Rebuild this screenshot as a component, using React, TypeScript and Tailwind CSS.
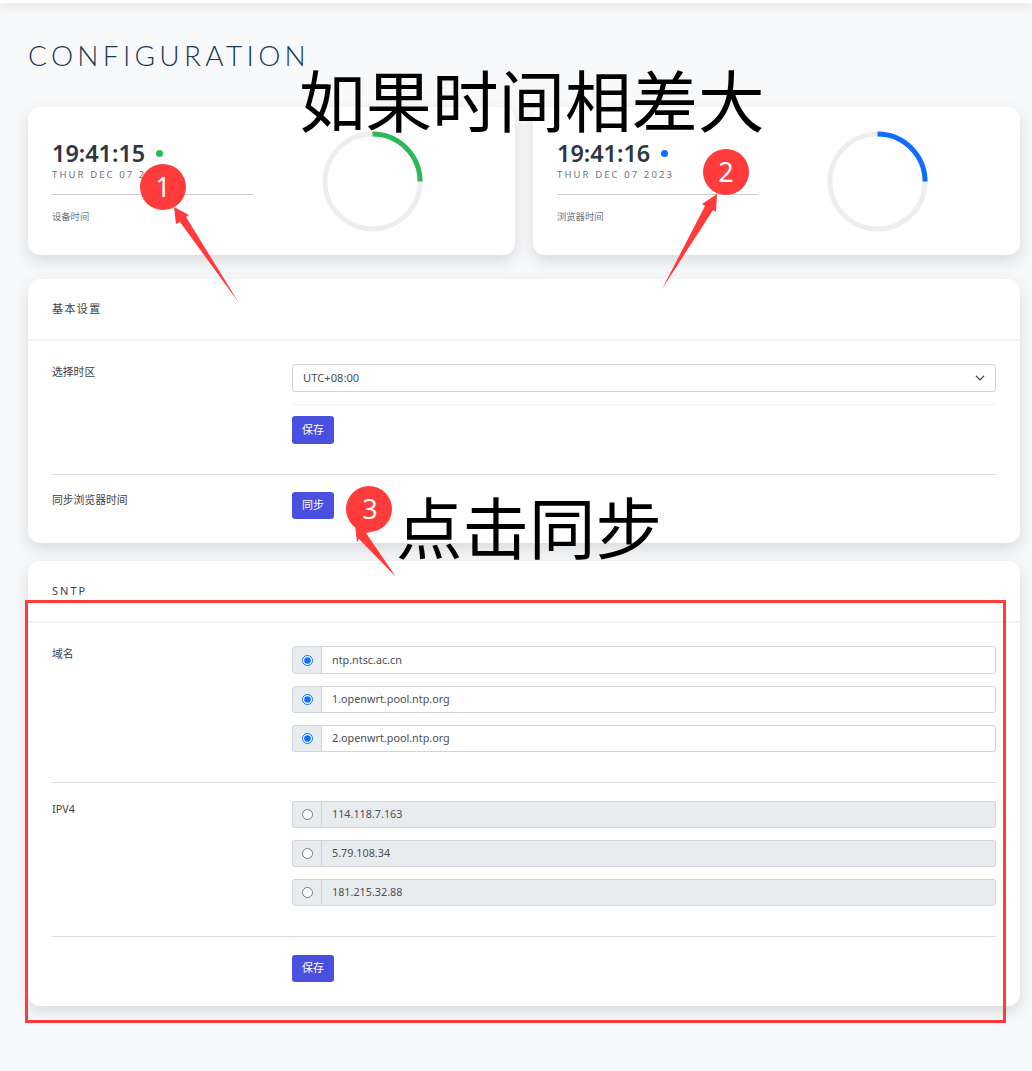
import type { ReactNode } from 'react';

const cjk = '"Noto Sans", "Noto Sans CJK SC", sans-serif';

function Clock({ time, date, label, dot, arc }: { time: string; date: string; label: string; dot: string; arc: string }) {
    return (
        <div className="flex-1 h-[148px] bg-white rounded-[12px] shadow-[0_6px_16px_rgba(0,0,0,0.13)] px-6 flex">
            <div className="w-[201px] pt-[30px]">
                <div className="flex items-center h-[32px]">
                    <span className="text-[23.4px] leading-[32px] font-semibold text-[#2f3640] w-[92px] whitespace-nowrap">{time}</span>
                    <span className={`ml-[12px] w-[7px] h-[7px] rounded-full ${dot}`} />
                </div>
                <div className="-mt-[1px] text-[9.5px] leading-[14px] tracking-[2.1px] text-[#6c757d] whitespace-nowrap">{date}</div>
                <div className="mt-[12px] border-t border-[#ccc]" />
                <div className="mt-[15px] text-[9.3px] leading-[14px] text-[#6c757d]">{label}</div>
            </div>
            <div className="flex-1 flex items-center justify-center pl-[1px]">
                <svg width="101" height="101" viewBox="0 0 102 102">
                    <circle cx="51" cy="51" r="48" fill="none" stroke="#eeeeee" strokeWidth="5" />
                    <path d="M51 3 A48 48 0 0 1 99 51" fill="none" stroke={arc} strokeWidth="5" />
                </svg>
            </div>
        </div>
    );
}

function Card({ title, tracking, children }: { title: string; tracking: string; children: ReactNode }) {
    return (
        <div className="bg-white rounded-[12px] shadow-[0_6px_16px_rgba(0,0,0,0.13)]">
            <div className={`h-[62px] px-6 flex items-center border-b-2 border-[#f3f4f5] text-[11px] text-[#3c4248] ${tracking}`}>{title}</div>
            {children}
        </div>
    );
}

function Row({ label, children }: { label: string; children: ReactNode }) {
    return (
        <div className="flex">
            <div className="w-[240px] text-[10.8px] leading-[16px] text-[#3c4248]">{label}</div>
            <div className="flex-1">{children}</div>
        </div>
    );
}

function PrimaryButton({ tall, children }: { tall?: boolean; children: ReactNode }) {
    return (
        <button className={`w-[42px] rounded-[3px] bg-[#4950df] text-white text-[11px] flex items-center justify-center ${tall ? 'h-[28px]' : 'h-[27px]'}`}>
            {children}
        </button>
    );
}

function RadioInput({ value, checked, tall }: { value: string; checked: boolean; tall?: boolean }) {
    return (
        <div className={`flex text-[10.8px] text-[#495057] ${tall ? 'h-[28px]' : 'h-[27px]'}`}>
            <div className="w-[30px] bg-[#e9ecef] border border-[#ced4da] rounded-l-[3px] flex items-center justify-center">
                <input type="radio" checked={checked} readOnly className="m-0 w-[11px] h-[11px] accent-[#0d6efd]" />
            </div>
            <div className={`flex-1 -ml-px border border-[#ced4da] rounded-r-[3px] pl-[10px] flex items-center ${checked ? 'bg-white' : 'bg-[#e9ecef]'}`}>
                {value}
            </div>
        </div>
    );
}

export default function App() {
    const domains = ['ntp.ntsc.ac.cn', '1.openwrt.pool.ntp.org', '2.openwrt.pool.ntp.org'];
    const addresses = ['114.118.7.163', '5.79.108.34', '181.215.32.88'];

    return (
        <div className="relative min-h-[1071px] bg-[#f8f9fb] overflow-hidden" style={{ fontFamily: cjk }}>
            <div className="h-[3px] bg-white shadow-[0_2px_10px_rgba(0,0,0,0.2)]" />

            <div className="pl-[28px] pr-[12px]">
                <h1 className="mt-[34px] h-[36px] text-[28px] leading-[36px] font-light tracking-[4.3px] text-[#1d3b53]" style={{ fontFamily: 'Lato, sans-serif' }}>
                    CONFIGURATION
                </h1>

                <div className="mt-[34px] flex gap-[18px]">
                    <Clock time="19:41:15" date="THUR DEC 07 2023" label="设备时间" dot="bg-[#2eb85c]" arc="#2eb85c" />
                    <Clock time="19:41:16" date="THUR DEC 07 2023" label="浏览器时间" dot="bg-[#0d6efd]" arc="#0d6efd" />
                </div>

                {/* basic settings */}
                <div className="mt-[24px]">
                    <Card title="基本设置" tracking="tracking-[1.4px]">
                        <div className="px-6 pt-[23px] pb-[24px]">
                            <Row label="选择时区">
                                <div className="h-[28px] border border-[#ced4da] rounded-[3px] pl-[10px] pr-[10px] flex items-center justify-between text-[11.2px] text-[#495057]">
                                    UTC+08:00
                                    <svg width="10" height="10" viewBox="0 0 16 16" fill="none" stroke="#343a40" strokeWidth="2" strokeLinecap="round" strokeLinejoin="round">
                                        <path d="M2 5l6 6 6-6" />
                                    </svg>
                                </div>
                                <div className="mt-[12px] border-t border-[#f0f0f0]" />
                                <div className="mt-[11px]">
                                    <PrimaryButton tall>保存</PrimaryButton>
                                </div>
                            </Row>
                            <div className="mt-[30px] mb-[17px] border-t border-[#dcdcdc]" />
                            <Row label="同步浏览器时间">
                                <PrimaryButton>同步</PrimaryButton>
                            </Row>
                        </div>
                    </Card>
                </div>

                {/* sntp */}
                <div className="mt-[18px]">
                    <Card title="SNTP" tracking="tracking-[2px]">
                        <div className="px-6 pt-[23px] pb-[24px]">
                            <Row label="域名">
                                <div className="flex flex-col gap-[12px]">
                                    {domains.map((domain, i) => (
                                        <RadioInput key={domain} value={domain} checked tall={i === 0} />
                                    ))}
                                </div>
                            </Row>
                            <div className="mt-[30px] mb-[18px] border-t border-[#dcdcdc]" />
                            <Row label="IPV4">
                                <div className="flex flex-col gap-[12px]">
                                    {addresses.map((address) => (
                                        <RadioInput key={address} value={address} checked={false} />
                                    ))}
                                </div>
                            </Row>
                            <div className="mt-[30px] mb-[18px] border-t border-[#dcdcdc]" />
                            <Row label="">
                                <PrimaryButton>保存</PrimaryButton>
                            </Row>
                        </div>
                    </Card>
                </div>
            </div>

            {/* annotations drawn over the screenshot */}
            <div className="absolute left-[299px] top-[56px] text-[66.5px] leading-[84px] text-black whitespace-nowrap" style={{ fontFamily: '"Noto Sans CJK SC", sans-serif' }}>如果时间相差大</div>
            <div className="absolute left-[396px] top-[483px] text-[66.5px] leading-[84px] text-black whitespace-nowrap" style={{ fontFamily: '"Noto Sans CJK SC", sans-serif' }}>点击同步</div>
            <div className="absolute left-[25px] top-[600px] w-[981px] h-[423px] border-[3px] border-[#ff3b3b]" />

            <svg className="absolute left-0 top-0 pointer-events-none" width="1032" height="1071" viewBox="0 0 1032 1071">
                <g fill="#ff3b3b">
                    <polygon points="174,207 189,215 186,217 239,303 180,222 176,224" />
                    <polygon points="717,194 702,204 705,206 662,289 713,210 716,212" />
                    <polygon points="355,525 357,542 359,539 396,577 366,533 371,532" />
                    <circle cx="163" cy="187" r="23" />
                    <circle cx="726" cy="172" r="23" />
                    <circle cx="369" cy="509" r="23" />
                </g>
            </svg>
            <div className="absolute left-[140px] top-[164px] w-[46px] h-[46px] flex items-center justify-center text-[27px] text-white">1</div>
            <div className="absolute left-[703px] top-[149px] w-[46px] h-[46px] flex items-center justify-center text-[27px] text-white">2</div>
            <div className="absolute left-[347px] top-[486px] w-[46px] h-[46px] flex items-center justify-center text-[27px] text-white">3</div>
        </div>
    );
}
